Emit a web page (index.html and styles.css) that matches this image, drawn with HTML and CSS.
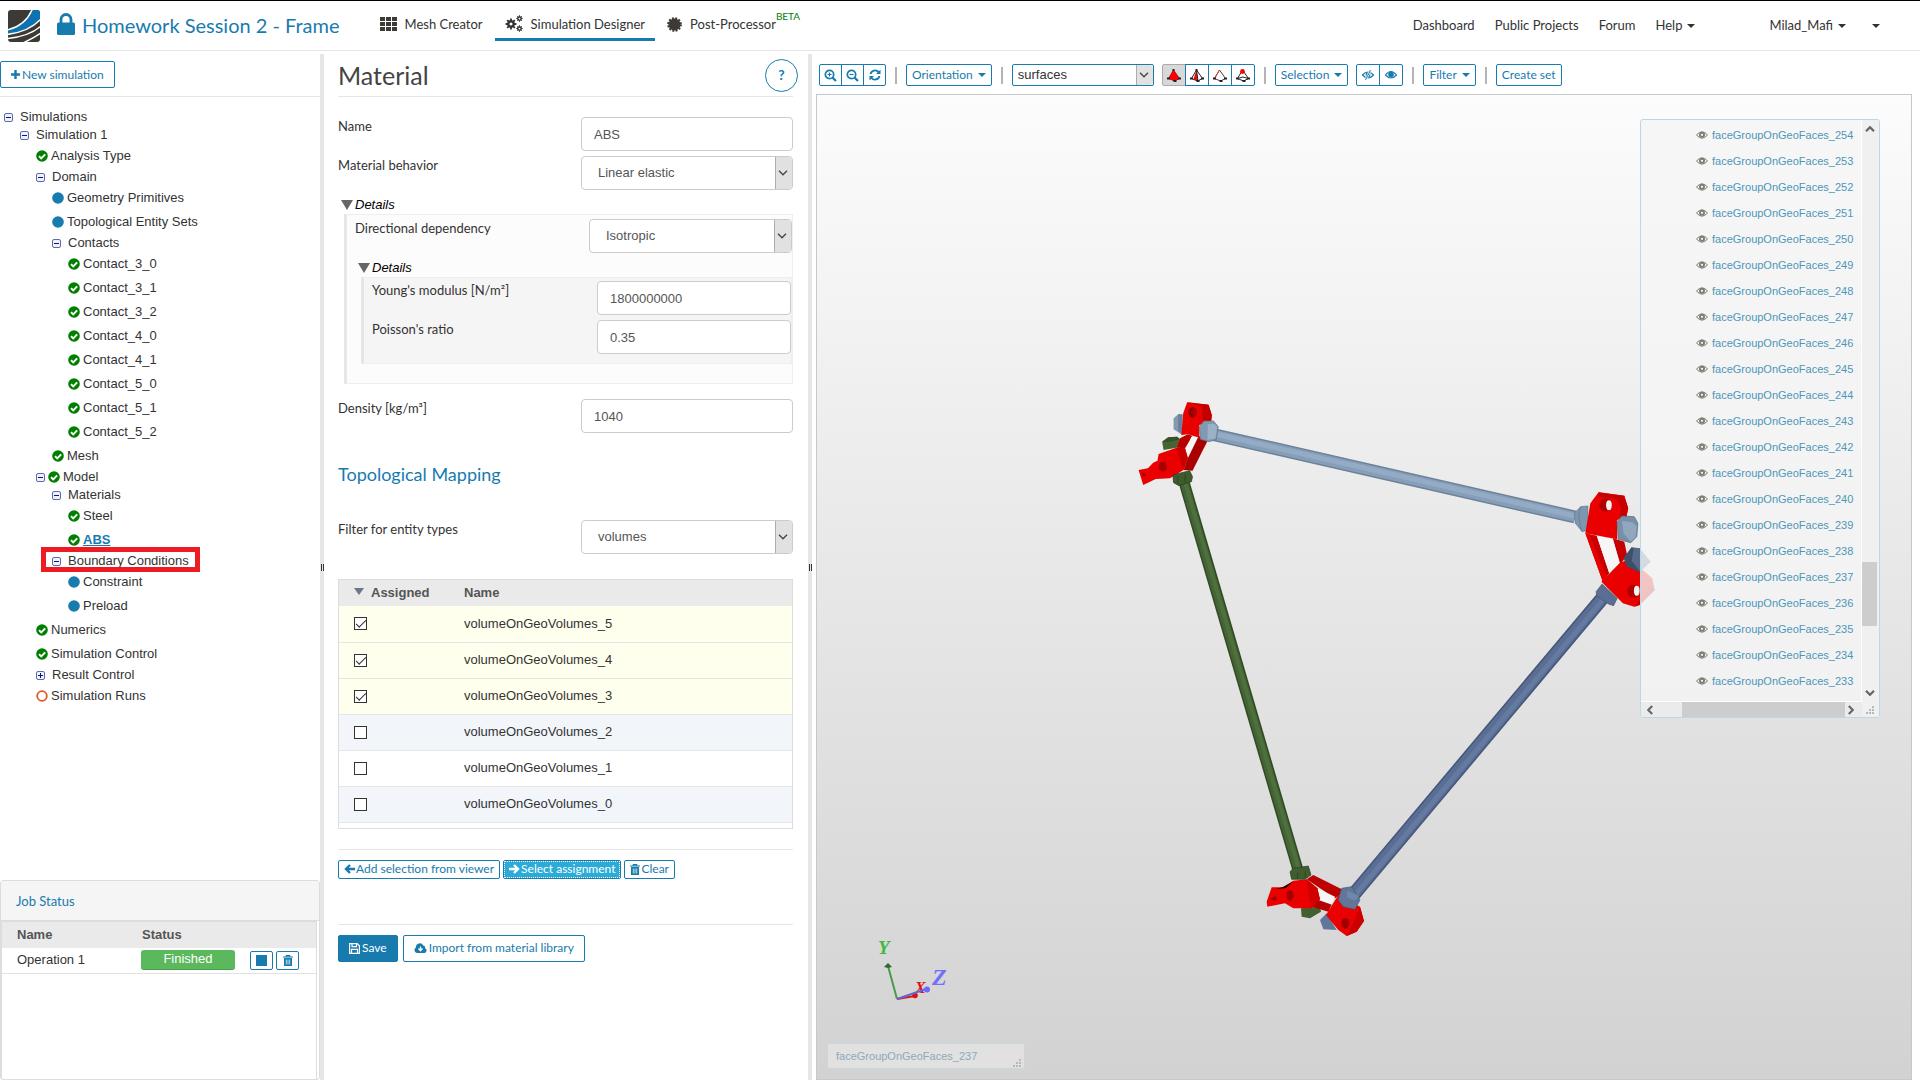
FILE: index.html
```html
<!DOCTYPE html>
<html lang="en">
<head>
<meta charset="utf-8">
<title>Homework Session 2 - Frame</title>
<link rel="stylesheet" href="styles.css">
</head>
<body>
<svg class="sprite" aria-hidden="true">
  <symbol id="ok" viewBox="0 0 12 12"><circle cx="6" cy="6" r="5.8" fill="#008000"/><path d="M3 6.2l2.2 2.2L9.2 4.3" fill="none" stroke="#fff" stroke-width="1.9"/></symbol>
  <symbol id="dot" viewBox="0 0 12 12"><circle cx="6" cy="6" r="5.8" fill="#187bae"/></symbol>
  <symbol id="ring" viewBox="0 0 12 12"><circle cx="6" cy="6" r="4.8" fill="none" stroke="#e0562c" stroke-width="1.8"/></symbol>
  <symbol id="minus" viewBox="0 0 9 9"><rect x=".5" y=".5" width="8" height="8" rx="1.5" fill="#f0f2fa" stroke="#5c6bb0"/><path d="M2 4.5h5" stroke="#10108c"/></symbol>
  <symbol id="plusbox" viewBox="0 0 9 9"><rect x=".5" y=".5" width="8" height="8" rx="1.5" fill="#f0f2fa" stroke="#5c6bb0"/><path d="M2 4.5h5M4.500 2v5" stroke="#10108c"/></symbol>
  <symbol id="eye" viewBox="0 0 12 8"><path d="M.5 4Q6-2.400 11.500 4Q6 10.400.5 4z" fill="none" stroke="currentColor"/><circle cx="6" cy="3.800" r="2.100" fill="none" stroke="currentColor" stroke-width="1.900"/></symbol>
  <symbol id="trash" viewBox="0 0 10 11"><path d="M0 2h10M3.300 2V.6h3.400V2" fill="none" stroke="currentColor" stroke-width="1.200"/><path d="M1 3h8v8H1z" fill="currentColor"/><path d="M3.300 4.500v5M5 4.500v5M6.700 4.500v5" stroke="#fff" stroke-width=".7"/></symbol>
  <symbol id="chev" viewBox="0 0 10 6"><path d="M1 .8l4 4 4-4" fill="none" stroke="currentColor" stroke-width="1.300"/></symbol>
  <symbol id="arrow" viewBox="0 0 10 6"><path d="M1 .8l4 4 4-4" fill="none" stroke="currentColor" stroke-width="2.200"/></symbol>
  <symbol id="cog" viewBox="0 0 20 20"><path d="M10 3.500a6.500 6.500 0 1 0 .01 0zM10 7.500a2.500 2.500 0 1 1-.01 0z" fill="currentColor" fill-rule="evenodd"/><path d="M10 1v4M10 15v4M1 10h4M15 10h4M3.600 3.600l3 3M13.400 13.400l3 3M16.400 3.600l-3 3M6.600 13.400l-3 3" stroke="currentColor" stroke-width="3"/></symbol>
  <symbol id="grip" viewBox="0 0 9 8"><path d="M6 0h2v2H6zM3 3h2v2H3zM6 3h2v2H6zM0 6h2v2H0zM3 6h2v2H3zM6 6h2v2H6z" fill="#b8b8b8"/></symbol>
</svg>

<header class="topbar">
  <svg class="logo" viewBox="0 0 32 32" role="img" aria-label="Home">
    <defs><clipPath id="lc"><rect width="32" height="32" rx="3"/></clipPath></defs>
    <g clip-path="url(#lc)"><rect width="32" height="32" fill="#3d3935"/>
    <path d="M24 0h8v9Q20 22 0 24.500V20Q17 16 24 0z" fill="#0d72b0"/>
    <path d="M24 0Q17 16-1 20M33 9Q21 22-1 24.500M33 16Q22 26 0 28.500M33 23Q26 28 15 33" fill="none" stroke="#fff" stroke-width="1.500"/></g>
  </svg>
  <svg class="lock" viewBox="0 0 18 22"><path d="M4 11V6.500a5 5 0 0 1 10 0V11" fill="none" stroke="#187bae" stroke-width="2.800"/><rect y="9.500" width="18" height="12.500" rx="1.500" fill="#187bae"/></svg>
  <h1 class="project">Homework Session 2 - Frame</h1>
  <nav class="modes">
    <a href="#" class="mode"><svg width="17" height="14" viewBox="0 0 17 14"><path d="M0 0h5v4H0zM6 0h5v4H6zM12 0h5v4h-5zM0 5h5v4H0zM6 5h5v4H6zM12 5h5v4h-5zM0 10h5v4H0zM6 10h5v4H6zM12 10h5v4h-5z" fill="#3d3935"/></svg>Mesh Creator</a>
    <a href="#" class="mode active"><svg width="18" height="18" viewBox="0 0 18 18"><use href="#cog" x="0" y="3" width="12" height="12"/><use href="#cog" x="11" y="0" width="7" height="7"/><use href="#cog" x="11" y="10" width="7" height="7"/></svg>Simulation Designer</a>
    <a href="#" class="mode"><svg width="15" height="15" viewBox="0 0 20 20"><circle cx="10" cy="10" r="8" fill="#3d3935"/><circle cx="10" cy="10" r="8.500" fill="none" stroke="#3d3935" stroke-width="2.600" stroke-dasharray="2.600 1.850"/></svg>Post-Processor<sup class="beta">BETA</sup></a>
  </nav>
  <nav class="links">
    <a href="#">Dashboard</a><a href="#">Public Projects</a><a href="#">Forum</a><a href="#">Help<i class="caret"></i></a>
    <a href="#" class="user">Milad_Mafi<i class="caret"></i></a><a href="#" aria-label="More"><i class="caret"></i></a>
  </nav>
</header>

<main class="workspace">
  <aside class="sidebar">
    <div class="sidebar-head"><button class="btn new"><svg width="9" height="9" viewBox="0 0 9 9"><path d="M4.500 0v9M0 4.500h9" stroke="currentColor" stroke-width="2.400"/></svg>New simulation</button></div>
    <ul class="tree">
      <li class="node l0"><svg class="exp"><use href="#minus"/></svg>Simulations</li>
      <li class="node l1"><svg class="exp"><use href="#minus"/></svg>Simulation 1</li>
      <li class="leaf l2"><svg class="st"><use href="#ok"/></svg>Analysis Type</li>
      <li class="node l2"><svg class="exp"><use href="#minus"/></svg>Domain</li>
      <li class="leaf l3"><svg class="st"><use href="#dot"/></svg>Geometry Primitives</li>
      <li class="leaf l3"><svg class="st"><use href="#dot"/></svg>Topological Entity Sets</li>
      <li class="node l3"><svg class="exp"><use href="#minus"/></svg>Contacts</li>
      <li class="leaf l4"><svg class="st"><use href="#ok"/></svg>Contact_3_0</li>
      <li class="leaf l4"><svg class="st"><use href="#ok"/></svg>Contact_3_1</li>
      <li class="leaf l4"><svg class="st"><use href="#ok"/></svg>Contact_3_2</li>
      <li class="leaf l4"><svg class="st"><use href="#ok"/></svg>Contact_4_0</li>
      <li class="leaf l4"><svg class="st"><use href="#ok"/></svg>Contact_4_1</li>
      <li class="leaf l4"><svg class="st"><use href="#ok"/></svg>Contact_5_0</li>
      <li class="leaf l4"><svg class="st"><use href="#ok"/></svg>Contact_5_1</li>
      <li class="leaf l4"><svg class="st"><use href="#ok"/></svg>Contact_5_2</li>
      <li class="leaf l3"><svg class="st"><use href="#ok"/></svg>Mesh</li>
      <li class="node l2 both"><svg class="exp"><use href="#minus"/></svg><svg class="st"><use href="#ok"/></svg>Model</li>
      <li class="node l3"><svg class="exp"><use href="#minus"/></svg>Materials</li>
      <li class="leaf l4"><svg class="st"><use href="#ok"/></svg>Steel</li>
      <li class="leaf l4 current"><svg class="st"><use href="#ok"/></svg><a href="#">ABS</a></li>
      <li class="node l3 marked"><svg class="exp"><use href="#minus"/></svg>Boundary Conditions</li>
      <li class="leaf l4"><svg class="st"><use href="#dot"/></svg>Constraint</li>
      <li class="leaf l4"><svg class="st"><use href="#dot"/></svg>Preload</li>
      <li class="leaf l2"><svg class="st"><use href="#ok"/></svg>Numerics</li>
      <li class="leaf l2"><svg class="st"><use href="#ok"/></svg>Simulation Control</li>
      <li class="node l2"><svg class="exp"><use href="#plusbox"/></svg>Result Control</li>
      <li class="leaf l2"><svg class="st"><use href="#ring"/></svg>Simulation Runs</li>
    </ul>
    <section class="jobs">
      <h2>Job Status</h2>
      <div class="jobs-body">
        <table class="jobs-table">
          <colgroup><col class="jc1"><col class="jc2"><col></colgroup>
          <thead><tr><th>Name</th><th>Status</th><th></th></tr></thead>
          <tbody><tr><td>Operation 1</td><td><span class="badge">Finished</span></td><td><div class="job-actions"><button class="btn tiny" aria-label="Stop"><span class="stop"></span></button><button class="btn tiny" aria-label="Delete"><svg width="10" height="11"><use href="#trash"/></svg></button></div></td></tr></tbody>
        </table>
      </div>
    </section>
  </aside>
  <div class="splitter"></div>

  <section class="editor">
    <div class="editor-head"><h2>Material</h2><button class="help" aria-label="Help">?</button></div>
    <form class="form">
      <div class="row"><label for="name">Name</label><input id="name" class="field" type="text" value="ABS"></div>
      <div class="row"><label for="behav">Material behavior</label><div class="pick"><select id="behav"><option>Linear elastic</option></select><svg class="chev"><use href="#chev"/></svg></div></div>
      <details open>
        <summary>Details</summary>
        <div class="box">
          <div class="row"><label for="dir">Directional dependency</label><div class="pick mid"><select id="dir"><option>Isotropic</option></select><svg class="chev"><use href="#chev"/></svg></div></div>
          <details open>
            <summary>Details</summary>
            <div class="box inner">
              <div class="row"><label for="young">Young's modulus [N/m²]</label><input id="young" class="field small" type="text" value="1800000000"></div>
              <div class="row"><label for="poisson">Poisson's ratio</label><input id="poisson" class="field small" type="text" value="0.35"></div>
            </div>
          </details>
        </div>
      </details>
      <div class="row density"><label for="dens">Density [kg/m³]</label><input id="dens" class="field" type="text" value="1040"></div>
      <h3>Topological Mapping</h3>
      <div class="row"><label for="filt">Filter for entity types</label><div class="pick"><select id="filt"><option>volumes</option></select><svg class="chev"><use href="#chev"/></svg></div></div>
      <div class="map-wrap">
        <table class="map">
          <colgroup><col class="mc1"><col></colgroup>
          <thead><tr><th><i class="sort"></i>Assigned</th><th>Name</th></tr></thead>
          <tbody>
            <tr class="on"><td><input type="checkbox" id="v5" checked></td><td><label for="v5">volumeOnGeoVolumes_5</label></td></tr>
            <tr class="on"><td><input type="checkbox" id="v4" checked></td><td><label for="v4">volumeOnGeoVolumes_4</label></td></tr>
            <tr class="on"><td><input type="checkbox" id="v3" checked></td><td><label for="v3">volumeOnGeoVolumes_3</label></td></tr>
            <tr class="alt"><td><input type="checkbox" id="v2"></td><td><label for="v2">volumeOnGeoVolumes_2</label></td></tr>
            <tr><td><input type="checkbox" id="v1"></td><td><label for="v1">volumeOnGeoVolumes_1</label></td></tr>
            <tr class="alt"><td><input type="checkbox" id="v0"></td><td><label for="v0">volumeOnGeoVolumes_0</label></td></tr>
          </tbody>
        </table>
      </div>
      <div class="assign">
        <button type="button" class="btn xs"><svg width="11" height="10" viewBox="0 0 11 10"><path d="M11 5H2M6 1L2 5l4 4" fill="none" stroke="currentColor" stroke-width="2.400"/></svg>Add selection from viewer</button>
        <button type="button" class="btn xs focused"><svg width="11" height="10" viewBox="0 0 11 10"><path d="M0 5h9M5 1l4 4-4 4" fill="none" stroke="currentColor" stroke-width="2.400"/></svg>Select assignment</button>
        <button type="button" class="btn xs"><svg width="10" height="11"><use href="#trash"/></svg>Clear</button>
      </div>
      <div class="submit">
        <button type="button" class="btn primary"><svg width="11" height="11" viewBox="0 0 11 11"><path d="M.6.6h7.600l2.200 2.200v7.600H.6zM3 .6v3h4.500v-3M2.500 10V6.300h6V10" fill="none" stroke="currentColor" stroke-width="1.200"/></svg>Save</button>
        <button type="button" class="btn"><svg width="13" height="10" viewBox="0 0 13 10"><path d="M3 10a3 3 0 0 1-1-5.600A3.800 3.800 0 0 1 9.200 2.500 2.200 2.200 0 0 1 11 5.200 2.500 2.500 0 0 1 10.500 10z" fill="currentColor"/><path d="M6.500 3.500v4M4.500 5.500l2 2.200 2-2.200" fill="none" stroke="#fff" stroke-width="1.300"/></svg>Import from material library</button>
      </div>
    </form>
  </section>
  <div class="splitter"></div>

  <section class="viewer">
    <div class="toolbar">
      <div class="group slim">
        <button class="btn tool" aria-label="Zoom in"><svg width="13" height="13" viewBox="0 0 13 13" fill="none" stroke="currentColor"><circle cx="5.500" cy="5.500" r="4.200" stroke-width="1.700"/><path d="M8.500 8.500l3.500 3.500" stroke-width="2.200"/><path d="M3.500 5.500h4M5.500 3.500v4" stroke-width="1.200"/></svg></button>
        <button class="btn tool" aria-label="Zoom out"><svg width="13" height="13" viewBox="0 0 13 13" fill="none" stroke="currentColor"><circle cx="5.500" cy="5.500" r="4.200" stroke-width="1.700"/><path d="M8.500 8.500l3.500 3.500" stroke-width="2.200"/><path d="M3.500 5.500h4" stroke-width="1.200"/></svg></button>
        <button class="btn tool" aria-label="Refresh"><svg width="12" height="12" viewBox="0 0 12 12"><path d="M1.500 5a4.600 4.600 0 0 1 8.200-1.700M10.500 7a4.600 4.600 0 0 1-8.200 1.700" fill="none" stroke="currentColor" stroke-width="1.800"/><path d="M11.500.5v4.500H7zM.5 11.500V7H5z" fill="currentColor"/></svg></button>
      </div>
      <i class="sep"></i>
      <button class="btn drop">Orientation<i class="caret"></i></button>
      <i class="sep"></i>
      <div class="pick tb"><select aria-label="Entity type"><option>surfaces</option></select><svg class="chev"><use href="#chev"/></svg></div>
      <div class="group">
        <button class="btn tool shape pressed" aria-label="Volumes"><svg width="14" height="13" viewBox="0 0 14 13"><path d="M6.500 1L1.500 9.500l6 2.500 5-2.500z" fill="#f00" stroke="#a00" stroke-width=".8"/><path d="M0 8.500h3v2H0zM6.500 11h3v2h-3zM11 8.500h3v2h-3zM5.500 0h2v2h-2z" fill="#222"/></svg></button>
        <button class="btn tool shape" aria-label="Faces"><svg width="14" height="13" viewBox="0 0 14 13"><path d="M6.500 1l1.500 11-4.500-2z" fill="#f00"/><path d="M6.500 1L1.500 9.500l6 2.500 5-2.500zM6.500 1l1.500 11" fill="none" stroke="#222"/><path d="M0 8.500h3v2H0zM6.500 11h3v2h-3zM11 8.500h3v2h-3zM5.500 0h2v2h-2z" fill="#222"/></svg></button>
        <button class="btn tool shape" aria-label="Edges"><svg width="14" height="13" viewBox="0 0 14 13"><path d="M6.500 1L1.500 9.500l6 2.500 5-2.500z" fill="none" stroke="#444"/><path d="M6.500 1l-5 8.500" stroke="#e33"/><path d="M0 8.500h3v2H0zM6.500 11h3v2h-3zM11 8.500h3v2h-3z" fill="#222"/></svg></button>
        <button class="btn tool shape" aria-label="Points"><svg width="14" height="13" viewBox="0 0 14 13"><path d="M6.500 1L1.500 9.500l6 2.500 5-2.500zM1.500 9.500L7 8l5.500 1.500" fill="none" stroke="#222"/><path d="M0 8.500h3v2H0zM6.500 11h3v2h-3zM11 8.500h3v2h-3z" fill="#222"/><circle cx="6.500" cy="2.500" r="2.400" fill="#f00"/></svg></button>
      </div>
      <i class="sep"></i>
      <button class="btn drop">Selection<i class="caret"></i></button>
      <div class="group">
        <button class="btn tool" aria-label="Hide"><svg width="12" height="10" viewBox="0 -1 12 10"><path d="M.5 4Q6-2 11.500 4Q6 10 .5 4z" fill="none" stroke="currentColor" stroke-width="1.200"/><circle cx="6" cy="4" r="2.400" fill="currentColor"/><path d="M8.500-1l-5 10" stroke="#fff" stroke-width="2.200"/><path d="M8.500-1l-5 10" stroke="currentColor"/></svg></button>
        <button class="btn tool" aria-label="Show"><svg width="12" height="10" viewBox="0 -1 12 10"><path d="M.5 4Q6-3 11.500 4Q6 10 .5 4z" fill="none" stroke="currentColor" stroke-width="1.200"/><circle cx="6" cy="3.600" r="2.800" fill="currentColor"/></svg></button>
      </div>
      <i class="sep"></i>
      <button class="btn drop">Filter<i class="caret"></i></button>
      <i class="sep"></i>
      <button class="btn drop">Create set</button>
    </div>
    <div class="canvas">
      <svg class="scene" viewBox="817 95 1094 984" preserveAspectRatio="xMidYMid slice">
        <!-- rods -->
        <g fill="none">
          <path d="M1211 434L1575 517" stroke="#6c8299" stroke-width="13"/><path d="M1211 434L1575 517" stroke="#879eb8" stroke-width="10"/><path d="M1211 433L1575 516" stroke="#94abc5" stroke-width="5"/>
          <path d="M1184 482L1298 870" stroke="#314a24" stroke-width="11"/><path d="M1184 482L1298 870" stroke="#456435" stroke-width="8"/><path d="M1185 482L1299 870" stroke="#4e703c" stroke-width="4"/>
          <path d="M1605 595L1354 894" stroke="#45557a" stroke-width="14"/><path d="M1605 595L1354 894" stroke="#5a6e93" stroke-width="11"/><path d="M1606 596L1355 895" stroke="#657aa0" stroke-width="5"/>
        </g>
        <!-- upper joints -->
        <g transform="translate(1120 380) scale(.35714 .33333)">
          <path d="M150 115l13-12h12v62l-25-17z" fill="#8299b1"/><path d="M163 103h12v62l-12-12z" fill="#69809a"/>
          <path d="M118 185l17-13 25-2 8 8-10 25-36 7z" fill="#466535"/><path d="M118 185l17-13 25-2 8 8-30 8z" fill="#375228"/>
          <path d="M190 163l13 5-21 37-24-2 10-28z" fill="#b90000"/>
          <path d="M200 170l18 2-26 56-7-20z" fill="#f7f7f7"/>
          <path d="M222 168l23 15-42 89-25-2 12-35 28-62z" fill="#a90000"/>
          <path d="M188 67l60 7 9 31-2 22-33 8v38l-32-10-18 2 5-65z" fill="#e90000"/>
          <path d="M188 67l60 7 9 31-2 22-23-2-2-45z" fill="#c20000"/>
          <ellipse cx="203" cy="97" rx="12" ry="16" fill="#a80000"/><path d="M203 82q-10 14 0 30" fill="none" stroke="#600" stroke-width="2"/>
          <path d="M108 222l50-19 24 2 8 30-12 35-38 25-40 2-35 18-13-45 26-5 15-17 12-6z" fill="#ea0000"/>
          <path d="M158 203l24 2 8 30-12 35z" fill="#c90000"/>
          <ellipse cx="120" cy="260" rx="11" ry="15" fill="#a80000"/><path d="M60 275l14 12-10 2z" fill="#a00000"/>
          <path d="M222 140l13-17h27l13 17-5 38-20 7-25-7z" fill="#8199b1" stroke="#5e7489" stroke-width="2"/><path d="M246 132h18l8 8-5 35-22 5z" fill="#9bb1c8"/>
          <path d="M148 285l47-13 8 18-3 15-35 12-15-9z" fill="#3e5b2e" stroke="#263b1a" stroke-width="2"/><path d="M162 288v24M182 283v25" stroke="#263b1a" stroke-width="2"/>
          <path d="M1272 400l18-20 20-2v72l-15 5-20-25z" fill="#7e96af" stroke="#5e7489" stroke-width="2"/><path d="M1290 380l-6 25 8 50" fill="none" stroke="#5e7489" stroke-width="2"/>
          <path d="M1303 460l32 7 35 113-18 25z" fill="#c90000"/><path d="M1303 460l12 3 48 130-11 12z" fill="#e60000"/>
          <path d="M1380 475l32 10 8 40-20 30z" fill="#c60000"/>
          <path d="M1335 467l45 11 20 72-30 30z" fill="#f6f6f6"/>
          <path d="M1340 337l72 10 11 38-5 25-26 10v58l-89-18 14-90z" fill="#ea0000"/>
          <path d="M1340 337l72 10 11 38-5 25-18 0 3-25-12-27-50-8z" fill="#c80000"/>
          <ellipse cx="1360" cy="375" rx="18" ry="20" fill="#b00000"/><ellipse cx="1369" cy="376" rx="8" ry="15" fill="#f4f4f4"/>
          <path d="M1400 548l20-8 50 35 20 20 7 35-42 45-15 5-32-10-60-65z" fill="#ea0000"/><path d="M1497 630l-42 45-15 5 20-25 30-40z" fill="#c00000"/>
          <ellipse cx="1438" cy="634" rx="18" ry="20" fill="#b00000"/><ellipse cx="1447" cy="632" rx="8" ry="15" fill="#f4f4f4"/>
          <path d="M1392 425l13-17 35 2 10 20-3 40-17 18-35-10z" fill="#778fa7" stroke="#53687c" stroke-width="2"/><path d="M1405 422l30 5 12 12-3 32-14 14-20-25z" fill="#90a7bd"/>
          <path d="M1410 535l22-33 23 3 30 40-30 32-35-17z" fill="#3f4e6a"/><path d="M1438 504l17 1 30 40-30 28-22-30z" fill="#576a8c"/>
          <path d="M1333 635l17-23 42 43-10 22-14-5-33-25z" fill="#5a6e91" stroke="#44546f" stroke-width="2"/>
        </g>
        <!-- lower joint -->
        <g transform="translate(1230 840) scale(.33333)">
          <path d="M213 205l57-5 3 15-33 20-25-5z" fill="#41602f"/><path d="M270 240l20-20 30 50-40-2z" fill="#61779a"/>
          <path d="M230 118l20-13 90 45-10 15-15 10z" fill="#bd0000"/>
          <path d="M262 145l53 25-10 22-37-12z" fill="#f6f6f6"/>
          <path d="M245 200l20-20 40 14-10 21z" fill="#b40000"/>
          <path d="M125 142h35l30-20 40-4 32 27 8 33-25 27h-55l-25-15-53 10-2-15z" fill="#ea0000"/>
          <path d="M230 118l32 27 8 33-25 27-8-35z" fill="#d00000"/><path d="M138 148l22-8 30-16-22 20z" fill="#300"/>
          <path d="M325 165l65 35 12 43-22 32-30 13-25-18-37-45z" fill="#ea0000"/><path d="M390 200l12 43-22 32-30 13 22-45z" fill="#cb0000"/>
          <path d="M325 180l10-35 30-5 25 40-15 28-35-8z" fill="#627699" stroke="#46587a" stroke-width="2"/>
          <path d="M352 152l36 16-14 14-24-10z" fill="#7187a8"/>
          <path d="M180 95l10-10 45-7 8 27-18 13-40 0z" fill="#3f5d2e" stroke="#263b1a" stroke-width="2"/><path d="M203 98v18M226 94v18" stroke="#263b1a" stroke-width="2"/>
          <ellipse cx="180" cy="166" rx="11" ry="16" fill="#a80000"/><ellipse cx="346" cy="250" rx="12" ry="16" fill="#a00000"/><path d="M120 178l16-10 5 16z" fill="#a00000"/>
        </g>
        <!-- orientation axes -->
        <path d="M897 999L915 996" stroke="#c22" stroke-width="2"/><circle cx="915" cy="995.500" r="2.800" fill="#d11"/>
        <path d="M897 999L888 966" stroke="#4a9a4a" stroke-width="2"/><path d="M884 967l4-4 4 4-4 1z" fill="#2c6b2c"/>
        <text x="915" y="993" font-size="16" class="axis" fill="#d11">X</text>
        <path d="M897 999L926 989" stroke="#66c" stroke-width="2"/><circle cx="927" cy="989.500" r="3" fill="#6a6aff"/>
        <text x="878" y="954" font-size="19" class="axis" fill="#3dbb3d">Y</text>
        <text x="932" y="985" font-size="24" class="axis" fill="#7070ff">Z</text>
      </svg>
      <div class="picked">faceGroupOnGeoFaces_237<svg class="grip"><use href="#grip"/></svg></div>
      <div class="entities">
        <ul>
          <li><svg><use href="#eye"/></svg><a href="#">faceGroupOnGeoFaces_254</a></li>
          <li><svg><use href="#eye"/></svg><a href="#">faceGroupOnGeoFaces_253</a></li>
          <li><svg><use href="#eye"/></svg><a href="#">faceGroupOnGeoFaces_252</a></li>
          <li><svg><use href="#eye"/></svg><a href="#">faceGroupOnGeoFaces_251</a></li>
          <li><svg><use href="#eye"/></svg><a href="#">faceGroupOnGeoFaces_250</a></li>
          <li><svg><use href="#eye"/></svg><a href="#">faceGroupOnGeoFaces_249</a></li>
          <li><svg><use href="#eye"/></svg><a href="#">faceGroupOnGeoFaces_248</a></li>
          <li><svg><use href="#eye"/></svg><a href="#">faceGroupOnGeoFaces_247</a></li>
          <li><svg><use href="#eye"/></svg><a href="#">faceGroupOnGeoFaces_246</a></li>
          <li><svg><use href="#eye"/></svg><a href="#">faceGroupOnGeoFaces_245</a></li>
          <li><svg><use href="#eye"/></svg><a href="#">faceGroupOnGeoFaces_244</a></li>
          <li><svg><use href="#eye"/></svg><a href="#">faceGroupOnGeoFaces_243</a></li>
          <li><svg><use href="#eye"/></svg><a href="#">faceGroupOnGeoFaces_242</a></li>
          <li><svg><use href="#eye"/></svg><a href="#">faceGroupOnGeoFaces_241</a></li>
          <li><svg><use href="#eye"/></svg><a href="#">faceGroupOnGeoFaces_240</a></li>
          <li><svg><use href="#eye"/></svg><a href="#">faceGroupOnGeoFaces_239</a></li>
          <li><svg><use href="#eye"/></svg><a href="#">faceGroupOnGeoFaces_238</a></li>
          <li><svg><use href="#eye"/></svg><a href="#">faceGroupOnGeoFaces_237</a></li>
          <li><svg><use href="#eye"/></svg><a href="#">faceGroupOnGeoFaces_236</a></li>
          <li><svg><use href="#eye"/></svg><a href="#">faceGroupOnGeoFaces_235</a></li>
          <li><svg><use href="#eye"/></svg><a href="#">faceGroupOnGeoFaces_234</a></li>
          <li><svg><use href="#eye"/></svg><a href="#">faceGroupOnGeoFaces_233</a></li>
        </ul>
        <div class="vbar"><svg class="arr up"><use href="#arrow"/></svg><div class="track"><i></i></div><svg class="arr"><use href="#arrow"/></svg></div>
        <div class="hbar"><svg class="arr left"><use href="#arrow"/></svg><div class="track"><i></i></div><svg class="arr right"><use href="#arrow"/></svg></div>
        <div class="corner"><svg class="grip"><use href="#grip"/></svg></div>
      </div>
    </div>
  </section>
</main>
</body>
</html>
```
FILE: styles.css
```css
* { box-sizing: border-box; }
:root { --blue: #187bae; --line: #e6e6e6; --ui: Lato, "Open Sans", sans-serif; --text: "Liberation Sans", Arial, sans-serif; }
html, body { height: 100%; }
body { margin: 0; display: flex; flex-direction: column; background: #fff; color: #333; font: 13px/18px var(--text); overflow: hidden; }
h1, h2, h3, ul { margin: 0; padding: 0; font-weight: 400; }
ul { list-style: none; }
a { color: inherit; text-decoration: none; }
svg { display: block; flex: none; }
.sprite { position: absolute; width: 0; height: 0; }
button, input, select { font: inherit; color: inherit; margin: 0; }
.caret { display: inline-block; border: 4px solid transparent; border-top-color: currentColor; border-bottom: 0; margin-left: 5px; vertical-align: 2px; }

/* top bar */
.topbar { flex: none; display: flex; align-items: center; height: 51px; padding-left: 8px; border-top: 1px solid #000; border-bottom: 1px solid var(--line); font: 13px/20px var(--ui); color: #333; }
.logo { width: 32px; height: 32px; }
.lock { width: 18px; height: 22px; margin: 0 7px 4px 17px; }
.project { color: var(--blue); font-size: 20px; line-height: 24px; padding-bottom: 2px; }
.modes { display: flex; gap: 2px; margin-left: 30px; }
.mode { display: flex; align-items: center; gap: 8px; height: 31px; padding: 0 10px; border-bottom: 3px solid transparent; }
.mode.active { border-color: var(--blue); }
.beta { align-self: flex-start; margin-left: -8px; font-size: 10px; line-height: 12px; color: #008000; }
.links { display: flex; gap: 20px; margin-left: auto; padding: 0 40px 2px 0; }
.user { margin-left: 54px; }
.links a:last-child { margin-left: 1px; }

/* panes */
.workspace { flex: 1; min-height: 0; padding-top: 3px; display: grid; grid-template-columns: 320px 4px 484px 4px minmax(0, 1fr); grid-template-rows: minmax(0, 1fr); }
.splitter { background: var(--line) linear-gradient(90deg, transparent 1px, #333 1px 2px, transparent 2px 3px, #333 3px) center / 4px 7px no-repeat; }

.btn { display: inline-flex; align-items: center; justify-content: center; gap: 2px; height: 27px; padding: 0 10px; border: 1px solid var(--blue); border-radius: 2px; background: #fff; color: var(--blue); font: 12px/16px var(--ui); white-space: nowrap; cursor: pointer; }
.btn.xs { height: 19px; padding: 0 5px; gap: 1px; }
.btn.primary { background: var(--blue); color: #fff; }
.btn.focused { background: #2bacd8; color: #fff; outline: 1px dotted #fff; outline-offset: -2px; }

/* simulation tree */
.sidebar { display: flex; flex-direction: column; min-height: 0; }
.sidebar-head { padding: 7px 0 8px; border-bottom: 1px solid var(--line); }
.tree { flex: 1; min-height: 0; padding-top: 11px; }
.tree li { display: flex; align-items: center; position: relative; }
.node { height: 18px; }
.leaf { height: 24px; }
.exp { width: 9px; height: 9px; margin-right: 7px; }
.both .exp { margin-right: 3px; }
.st { width: 12px; height: 12px; margin-right: 3px; }
.l0 { padding-left: 4px; }
.l1 { padding-left: 20px; }
.l2 { padding-left: 36px; }
.l3 { padding-left: 52px; }
.l4 { padding-left: 68px; }
.current a { color: var(--blue); font-weight: 700; text-decoration: underline; }
.marked::after { content: ""; box-sizing: border-box; position: absolute; left: 41px; top: -5px; width: 159px; height: 25px; border: 5px solid #ed1c24; }

/* job status */
.jobs { flex: none; height: 200px; display: flex; flex-direction: column; border: 1px solid #ddd; border-radius: 3px; }
.jobs h2 { padding: 10px 15px 9px; background: #f5f5f5; border-bottom: 1px solid #ddd; color: var(--blue); font: 13px/20px var(--ui); }
.jobs-body { flex: 1; margin-right: 2px; border: 1px solid #ddd; border-bottom: 0; }
table { width: 100%; border-collapse: collapse; table-layout: fixed; }
th, td { padding: 0; text-align: left; }
th { height: 26px; background: #eaeaea; color: #555; font-weight: 700; }
.jobs-table th, .jobs-table td { padding-left: 15px; }
.jobs-table td { height: 25px; border-bottom: 1px solid #e2e2e2; }
.jc1 { width: 125px; }
.jc2 { width: 108px; }
.jobs-table td:nth-child(2) { padding-left: 14px; }
.badge { display: block; width: 94px; height: 20px; border-radius: 3px; background: #5cb85c; border-bottom: 1px solid #4a9f4a; color: #fff; text-align: center; }
.job-actions { display: flex; gap: 3px; }
.btn.tiny { width: 23px; height: 19px; padding: 0; }
.stop { width: 11px; height: 11px; background: var(--blue); }

/* material editor */
.editor { padding: 0 15px 0 14px; min-width: 0; }
.editor-head { display: flex; align-items: center; justify-content: space-between; height: 43px; border-bottom: 1px solid var(--line); }
.editor-head h2 { font: 25px/32px var(--ui); color: #444; }
.help { width: 33px; height: 33px; margin-right: -5px; padding: 0; border: 1px solid var(--blue); border-radius: 50%; background: #fff; color: var(--blue); font: 700 14px/20px var(--ui); }
.form { padding-top: 20px; }
.row { display: flex; align-items: flex-start; justify-content: space-between; margin-bottom: 5px; }
.row label { font: 13px/18px var(--ui); }
.field, .pick { width: 212px; height: 34px; border: 1px solid #ccc; border-radius: 4px; background: #fff; color: #555; }
.field { padding: 0 12px; }
.field.small { width: 194px; }
.pick { display: flex; position: relative; }
.pick.mid { width: 203px; }
.pick select { flex: 1; min-width: 0; appearance: none; border: 0; border-radius: 4px; background: linear-gradient(90deg, #adadad 1px, #e1e1e1 1px) right / 17px 100% no-repeat; padding: 0 20px 0 16px; }
.chev { position: absolute; right: 4px; top: 50%; margin-top: -3px; width: 10px; height: 6px; color: #444; pointer-events: none; }
summary { display: flex; align-items: center; gap: 2px; height: 19px; padding-left: 3px; color: #000; font-style: italic; }
summary::before { content: ""; border: 6px solid transparent; border-top: 10px solid #666; border-bottom: 0; }
.box { margin-left: 6px; padding: 4px 0 19px 8px; border: 1px solid #eee; border-left: 3px solid var(--line); background: #fcfcfc; }
.box.inner { padding: 3px 0 4px 8px; background: #f5f5f5; }
.density { margin-top: 15px; }
.form h3 { margin: 29px 0 34px; color: var(--blue); font: 18px/24px var(--ui); }
.map-wrap { margin-top: 25px; padding-bottom: 5px; border: 1px solid #ddd; }
.mc1 { width: 110px; }
.map th, .map td { padding-left: 15px; }
.map td { height: 36px; border-bottom: 1px solid var(--line); }
.map tr.on { background: #ffffee; }
.map tr.alt { background: #f2f6fb; }
.sort { display: inline-block; border: 5px solid transparent; border-top: 7px solid #6b7785; border-bottom: 0; margin-right: 7px; vertical-align: 2px; }
.map input { appearance: none; display: block; width: 13px; height: 13px; border: 1px solid #333; background: #fff; }
.map input:checked::before { content: ""; display: block; width: 9px; height: 4px; margin: 2px 0 0 1px; border: solid #333; border-width: 0 0 1px 1px; transform: rotate(-45deg); }
.assign, .submit { display: flex; border-top: 1px solid var(--line); padding-top: 10px; }
.assign { gap: 3px; margin-top: 20px; height: 75px; align-items: flex-start; }
.submit { gap: 5px; }

/* viewer */
.viewer { display: flex; flex-direction: column; min-width: 0; padding: 0 8px 0 4px; }
.toolbar { flex: none; display: flex; align-items: center; gap: 8px; height: 40px; padding: 2px 0 0 3px; }
.toolbar .btn { height: 22px; }
.group { display: flex; }
.group .btn { width: 24px; padding: 0; border-radius: 0; }
.group.slim .btn { width: 23px; }
.group .btn + .btn { margin-left: -1px; }
.group .btn:first-child { border-radius: 2px 0 0 2px; }
.group .btn:last-child { border-radius: 0 2px 2px 0; }
.group .pressed { background: #d8d8d8; border-color: #aaa; }
.toolbar .drop { padding: 0 5px; gap: 0; }
.sep { width: 2px; height: 17px; margin: 0 1px; background: #b4b4b4; }
.pick.tb { width: 142px; height: 22px; border-color: var(--blue); border-radius: 2px; }
.pick.tb select { padding-left: 5px; color: #333; }
.canvas { flex: 1; min-height: 0; position: relative; border: 1px solid #c8c8c8; background: linear-gradient(#fcfcfc, #d2d2d2); overflow: hidden; }
.scene { position: absolute; inset: 0; width: 100%; height: 100%; }
.axis { font-family: "Liberation Serif", serif; font-weight: 700; font-style: italic; }
.picked { position: absolute; left: 10px; bottom: 10px; width: 198px; height: 26px; padding: 0 8px; border: 1px solid #c9d8de; border-radius: 3px; background: #e1e1e1; color: #8eaab6; font-size: 11px; line-height: 24px; }
.grip { width: 9px; height: 8px; }
.picked .grip { position: absolute; right: 2px; bottom: 1px; }
.entities { position: absolute; top: 24px; right: 31px; width: 240px; height: 599px; display: grid; grid-template: minmax(0, 1fr) 15px / minmax(0, 1fr) 17px; border: 1px solid #b5dbe8; border-radius: 3px; background: rgba(245, 245, 245, .8); overflow: hidden; }
.entities ul { padding-top: 2px; border-right: 1px solid #fff; border-bottom: 1px solid #fff; }
.entities li { display: flex; align-items: center; gap: 4px; height: 26px; padding-left: 55px; color: #7d7d70; font-size: 11px; line-height: 14px; }
.entities li svg { width: 12px; height: 8px; }
.entities li a { color: #4d97b9; }
.vbar, .hbar { display: flex; align-items: center; justify-content: space-between; }
.vbar { flex-direction: column; padding: 6px 2px 6px 0; background: #f0f0f0; }
.hbar { padding: 0 6px 0 4px; background: #ebebeb; }
.arr { width: 10px; height: 6px; color: #666; }
.up { transform: rotate(180deg); }
.left { transform: rotate(90deg); }
.right { transform: rotate(-90deg); }
.track { flex: 1; display: flex; align-self: stretch; }
.vbar .track { flex-direction: column; }
.track i { background: #cdcdcd; }
.vbar .track i { margin-top: 430px; height: 64px; }
.hbar .track i { margin-left: 27px; width: 163px; }
.corner { display: flex; align-items: center; justify-content: center; background: #f0f0f0; }
```
